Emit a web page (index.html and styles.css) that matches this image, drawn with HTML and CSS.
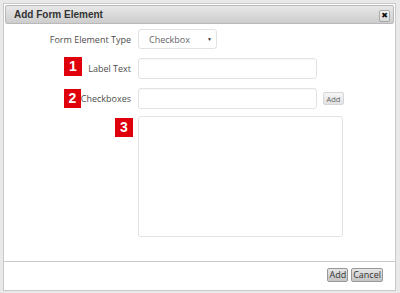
FILE: index.html
```html
<!DOCTYPE html>
<html lang="en">
<head>
    <meta charset="UTF-8">
    <title>Add Form Element</title>
    <link rel="stylesheet" href="styles.css">
</head>
<body>
    <div class="dialog">
        <div class="titlebar">
            <span class="title">Add Form Element</span>
            <span class="close">&#10006;</span>
        </div>

        <!-- Form body -->
        <div class="form">
            <div class="label">Form Element Type</div>
            <div class="field">
                <div class="select"><span>Checkbox</span><span class="arrow">&#9660;</span></div>
            </div>

            <div class="label"><span class="mark mark-up">1</span>Label Text</div>
            <div class="field"><input type="text" class="text"></div>

            <div class="label"><span class="mark">2</span>Checkboxes</div>
            <div class="field">
                <input type="text" class="text">
                <button class="small-btn">Add</button>
            </div>

            <div class="label label-top"><span class="mark mark-right">3</span></div>
            <div class="field"><textarea class="area"></textarea></div>
        </div>

        <div class="footer">
            <button class="btn">Add</button>
            <button class="btn">Cancel</button>
        </div>
    </div>
</body>
</html>
```

FILE: styles.css
```css
body {
    margin: 0;
    padding: 3px;
    background-color: #e9e9e9;
    font-family: "Open Sans", Arial, sans-serif;
    font-size: 9px;
    color: #555;
}
.dialog {
    width: 391px;
    height: 286px;
    background-color: white;
    border: 1px solid #c9c9c9;
    display: flex;
    flex-direction: column;
}
.titlebar {
    margin: 1px;
    height: 17px;
    border: 1px solid #b9b9b9;
    border-radius: 2px;
    background: linear-gradient(#e8e8e8, #cdcdcd);
    display: flex;
    align-items: center;
    justify-content: space-between;
    padding: 0 3px 0 8px;
}
.title {
    font-family: Arial, sans-serif;
    font-weight: bold;
    font-size: 10px;
    color: #333;
}
.close {
    width: 9px;
    height: 10px;
    border: 1px solid #aaa;
    border-radius: 2px;
    background: linear-gradient(#f4f4f4, #d8d8d8);
    font-size: 8px;
    line-height: 10px;
    text-align: center;
    color: #111;
    font-family: "DejaVu Sans", sans-serif;
    margin-top: 3px;
}
.form {
    flex: 1;
    display: grid;
    grid-template-columns: 127px auto;
    column-gap: 7px;
    row-gap: 9px;
    align-content: start;
    padding-top: 4px;
}
.label {
    display: flex;
    align-items: center;
    justify-content: flex-end;
    color: #4d4d4d;
}
.label-top {
    align-items: flex-start;
}
.field {
    display: flex;
    align-items: center;
}
.mark {
    width: 18px;
    height: 19px;
    background-color: #e0000c;
    color: white;
    font-family: Arial, sans-serif;
    font-weight: bold;
    font-size: 14px;
    line-height: 19px;
    text-align: center;
    margin-left: 60px;
    margin-right: auto;
}
.mark-up {
    margin-top: -5px;
}
.mark-right {
    margin-left: auto;
    margin-right: -2px;
    margin-top: 0px;
}
.select {
    width: 79px;
    height: 20px;
    box-sizing: border-box;
    border: 1px solid #e2e2e2;
    border-radius: 3px;
    display: flex;
    align-items: center;
    justify-content: space-between;
    padding: 0 4px 0 10px;
    color: #666;
}
.arrow {
    font-size: 5px;
    color: #333;
}
.text {
    width: 179px;
    height: 21px;
    box-sizing: border-box;
    border: 1px solid #e2e2e2;
    border-radius: 3px;
    margin: 0;
    padding: 0 4px;
    box-shadow: inset 0 1px 1px rgba(0,0,0,0.03);
}
.area {
    width: 205px;
    height: 121px;
    box-sizing: border-box;
    border: 1px solid #e2e2e2;
    border-radius: 3px;
    margin: -2px 0 0;
    resize: none;
}
.small-btn {
    margin-left: 6px;
    width: 21px;
    height: 13px;
    padding: 0;
    border: 1px solid #d6d6d6;
    border-radius: 2px;
    background: linear-gradient(#f6f6f6, #e2e2e2);
    font-family: "Open Sans", Arial, sans-serif;
    font-size: 7.5px;
    color: #666;
}
.footer {
    border-top: 1px solid #c9c9c9;
    height: 29px;
    display: flex;
    justify-content: flex-end;
    align-items: flex-start;
    gap: 3px;
    padding: 6px 12px 0 0;
    box-sizing: border-box;
}
.btn {
    height: 14px;
    padding: 0 1px;
    border: 1px solid #999;
    border-radius: 2px;
    background: linear-gradient(#e6e6e6, #c4c4c4);
    font-family: "Open Sans", Arial, sans-serif;
    font-size: 9px;
    line-height: 12px;
    color: #333;
}
```
